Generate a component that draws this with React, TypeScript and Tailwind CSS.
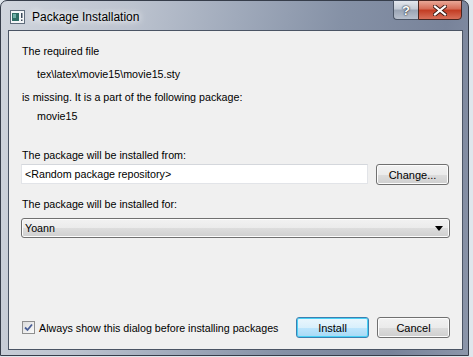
import React from 'react';

const FONT = '"Liberation Sans", Arial, sans-serif';

function WindowIcon() {
  return (
    <svg width="15" height="14" viewBox="0 0 15 14">
      <rect x="0.5" y="0.5" width="14" height="13" fill="#f4f6f8" stroke="#5e6b7a" />
      <rect x="2" y="3" width="7" height="8" fill="#2f6e66" />
      <rect x="3" y="4" width="3" height="4" fill="#6fb0a6" />
      <rect x="11" y="3" width="1.5" height="5" fill="#3c4a5a" />
      <rect x="11" y="9.5" width="1.5" height="1.5" fill="#3c4a5a" />
    </svg>
  );
}

function CaptionButtons() {
  return (
    <div className="ml-auto mr-px -mt-px self-start flex">
      <div className="w-[25px] h-[20px] rounded-bl-[4px] border border-[#4b5566] border-r-0 bg-[linear-gradient(180deg,#e4e8ee_0%,#c4cbd6_45%,#9aa4b4_50%,#b9c1ce_100%)] flex items-center justify-center">
        <span className="text-white font-bold text-[13px] leading-none [text-shadow:0_0_2px_#1d2430,0_0_1px_#1d2430]" style={{ fontFamily: FONT }}>?</span>
      </div>
      <div className="w-[44px] h-[20px] rounded-br-[4px] border border-[#4a2620] bg-[linear-gradient(180deg,#e9a897_0%,#d56b55_45%,#c23b22_50%,#d8705a_100%)] flex items-center justify-center">
        <svg width="14" height="11" viewBox="0 0 14 11">
          <path d="M2 1.5 L12 9.5 M12 1.5 L2 9.5" stroke="#3a1a14" strokeWidth="4" strokeLinecap="square" />
          <path d="M2 1.5 L12 9.5 M12 1.5 L2 9.5" stroke="#ffffff" strokeWidth="2.2" strokeLinecap="square" />
        </svg>
      </div>
    </div>
  );
}

function Button({ children, isDefault }: { children: React.ReactNode; isDefault?: boolean }) {
  return (
    <div
      className={`w-[73px] h-[21px] rounded-[3px] border flex items-center justify-center text-[11px] text-black ${
        isDefault
          ? 'border-[#3c7fb1] bg-[linear-gradient(180deg,#eaf6fd_0%,#d9f0fc_50%,#bee6fd_50%,#a7d9f5_100%)] shadow-[inset_0_0_0_1px_#48d1f5]'
          : 'border-[#707070] bg-[linear-gradient(180deg,#f2f2f2_0%,#ebebeb_50%,#dddddd_50%,#cfcfcf_100%)] shadow-[inset_0_0_0_1px_#fcfcfc]'
      }`}
    >
      {children}
    </div>
  );
}

export default function App() {
  return (
    <div className="w-[473px] h-[357px] bg-[#dfe6ec] overflow-hidden" style={{ fontFamily: FONT }}>
      <div className="w-[469px] h-[356px] rounded-t-[7px] border border-[#363d4a] bg-[linear-gradient(100deg,#d0d5dd_0%,#bcc3cf_25%,#a0aabb_45%,#8591a6_65%,#78839a_85%,#8c96aa_100%)] flex flex-col pl-[7px] pr-[5px] pb-[5px]">
        {/* Title bar */}
        <div className="h-[29px] flex items-center">
          <div className="ml-[2px] mt-[3px]">
            <WindowIcon />
          </div>
          <span className="ml-[7px] mt-[3px] text-[12px] text-black [text-shadow:0_0_6px_#ffffff,0_0_10px_#ffffff]">
            Package Installation
          </span>
          <CaptionButtons />
        </div>

        {/* Client area */}
        <div className="flex-1 border border-[#4a5464] bg-[#f0f0f0] flex flex-col px-[12px] pb-[11px] text-[10.7px] leading-[16px] text-black">
          <div className="mt-[12px] ml-px">The required file</div>
          <div className="mt-[7px] ml-[16px]">tex\latex\movie15\movie15.sty</div>
          <div className="mt-[7px] ml-px">is missing. It is a part of the following package:</div>
          <div className="mt-[3px] ml-[16px]">movie15</div>

          <div className="mt-[23px] ml-px">The package will be installed from:</div>
          <div className="mt-px flex items-start gap-[8px]">
            <div className="w-[347px] h-[20px] border border-[#e2e4e8] border-t-[#d4d7dc] bg-white flex items-center pl-[3px]">
              &lt;Random package repository&gt;
            </div>
            <Button>Change...</Button>
          </div>

          <div className="mt-[11px] ml-px">The package will be installed for:</div>
          <div className="mt-[6px] h-[20px] w-[429px] rounded-[3px] border border-[#707070] bg-[linear-gradient(180deg,#f2f2f2_0%,#ebebeb_50%,#dddddd_50%,#cfcfcf_100%)] shadow-[inset_0_0_0_1px_#fcfcfc] flex items-center pl-[3px] pr-[6px]">
            <span>Yoann</span>
            <svg className="ml-auto" width="8" height="5" viewBox="0 0 8 5">
              <path d="M0 0 H8 L4 5 Z" fill="#000000" />
            </svg>
          </div>

          <div className="mt-auto flex items-center">
            <div className="ml-px w-[13px] h-[13px] border border-[#8f8f8f] bg-[linear-gradient(135deg,#dcdcdc,#fbfbfb)] flex items-center justify-center">
              <svg width="9" height="9" viewBox="0 0 9 9">
                <path d="M1 4.5 L3.5 7 L8 1.5" stroke="#4a5f97" strokeWidth="1.8" fill="none" />
              </svg>
            </div>
            <span className="ml-[4px]">Always show this dialog before installing packages</span>
            <div className="ml-auto flex gap-[8px]">
              <Button isDefault>Install</Button>
              <Button>Cancel</Button>
            </div>
          </div>
        </div>
      </div>
    </div>
  );
}
